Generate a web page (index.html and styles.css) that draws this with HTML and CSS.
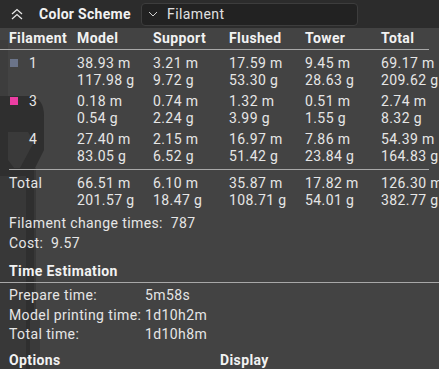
FILE: index.html
```html
<!DOCTYPE html>
<html>
<head>
<meta charset="utf-8">
<link rel="stylesheet" href="styles.css">
</head>
<body>
<div class="scene">
  <svg class="backdrop" width="80" height="369" viewBox="0 0 80 369">
    <path d="M0 168 L36 168 L36 369 L0 369 Z" fill="#383838"/>
    <path d="M0 96 L30 96 Q44 98 44 116 L44 150 L34 170 L34 369 L26 369 L26 176 L0 176 Z" fill="#2f2f2f"/>
    <path d="M8 132 L28 132 L34 142 L20 168 L14 168 L8 160 Z" fill="#3a3a3a"/>
    <path d="M0 40 L0 96 L8 96 L8 40 Z" fill="#3d3d3d"/>
    <path d="M30 320 L40 320 L40 369 L30 369 Z" fill="#3a3a3a"/>
  </svg>
  <div class="panel">
    <div class="topbar">
      <svg class="collapse" width="14" height="12" viewBox="0 0 14 12">
        <path d="M2 6 L7 1.5 L12 6 M2 11 L7 6.5 L12 11" fill="none" stroke="#e8e8e8" stroke-width="1.3"/>
      </svg>
      <span class="title">Color Scheme</span>
      <div class="select">
        <svg width="10" height="6" viewBox="0 0 10 6"><path d="M1 1 L5 5 L9 1" fill="none" stroke="#d0d0d0" stroke-width="1"/></svg>
        <span>Filament</span>
      </div>
    </div>
    <div class="table">
      <div class="row head">
        <div>Filament</div><div>Model</div><div>Support</div><div>Flushed</div><div>Tower</div><div>Total</div>
      </div>
      <div class="rule"></div>
      <div class="row data">
        <div class="fil"><span class="sw sw1"></span>1</div>
        <div>38.93 m<br>117.98 g</div><div>3.21 m<br>9.72 g</div><div>17.59 m<br>53.30 g</div><div>9.45 m<br>28.63 g</div><div>69.17 m<br>209.62 g</div>
      </div>
      <div class="row data">
        <div class="fil"><span class="sw sw3"></span>3</div>
        <div>0.18 m<br>0.54 g</div><div>0.74 m<br>2.24 g</div><div>1.32 m<br>3.99 g</div><div>0.51 m<br>1.55 g</div><div>2.74 m<br>8.32 g</div>
      </div>
      <div class="row data last">
        <div class="fil"><span class="sw sw4"></span>4</div>
        <div>27.40 m<br>83.05 g</div><div>2.15 m<br>6.52 g</div><div>16.97 m<br>51.42 g</div><div>7.86 m<br>23.84 g</div><div>54.39 m<br>164.83 g</div>
      </div>
      <div class="rule short"></div>
      <div class="row data total">
        <div>Total</div>
        <div>66.51 m<br>201.57 g</div><div>6.10 m<br>18.47 g</div><div>35.87 m<br>108.71 g</div><div>17.82 m<br>54.01 g</div><div>126.30 m<br>382.77 g</div>
      </div>
    </div>
    <div class="stats">
      <div>Filament change times:&nbsp;&nbsp;787</div>
      <div>Cost:&nbsp;&nbsp;9.57</div>
    </div>
    <div class="section te">Time Estimation</div>
    <div class="rule full"></div>
    <div class="times">
      <div>Prepare time:</div><div>5m58s</div>
      <div>Model printing time:</div><div>1d10h2m</div>
      <div>Total time:</div><div>1d10h8m</div>
    </div>
    <div class="bottom">
      <div class="section">Options</div>
      <div class="section">Display</div>
    </div>
  </div>
</div>
</body>
</html>
```

FILE: styles.css
```css
* { box-sizing: border-box; }
html, body { margin: 0; padding: 0; }
body {
  width: 439px;
  height: 369px;
  overflow: hidden;
  background: #434343;
  font-family: Roboto, "Noto Sans", sans-serif;
  font-size: 14px;
  letter-spacing: 0.4px;
  color: #e6e6e6;
}
.scene { position: relative; width: 439px; height: 369px; }
.backdrop { position: absolute; left: 0; top: 0; }
.panel { position: relative; }
.topbar {
  height: 28px;
  background: #2c2c2c;
  display: flex;
  align-items: center;
  padding-left: 10px;
}
.collapse { margin-right: 15px; }
.title { font-weight: bold; color: #f2f2f2; width: 102px; letter-spacing: 0.3px; }
.select {
  width: 217px;
  height: 23px;
  background: #222;
  border: 1px solid #3d3d3d;
  border-radius: 4px;
  display: flex;
  align-items: center;
  padding-left: 6px;
  gap: 9px;
  color: #e0e0e0;
}
.table { padding-left: 9px; }
.row { display: grid; grid-template-columns: 68px 76px 76px 76px 76px 76px; white-space: nowrap; }
.head { font-weight: bold; color: #f2f2f2; height: 21px; line-height: 17px; padding-top: 2px; }
.rule { height: 1px; background: #a8a8a8; margin-left: -9px; margin-right: 10px; }
.rule.short { margin-left: 0; margin-right: 10px; }
.rule.full { margin: 0; }
.data { line-height: 17px; padding: 5px 0 0; }
.data + .data { padding-top: 4px; }
.data.last { padding-bottom: 4px; }
.fil { display: flex; align-items: flex-start; }
.sw { width: 8px; height: 8px; margin: 4px 11px 0 1px; }
.sw1 { background: #6b7489; }
.sw3 { background: #ec3ea2; }
.sw4 { background: #3a3a3a; }
.data.total { padding-top: 5px; }
.stats { padding: 4px 9px 0; line-height: 20px; }
.section { font-weight: bold; color: #f2f2f2; padding: 8px 9px 3px; }
.section.te { padding-top: 10px; }
.times {
  display: grid;
  grid-template-columns: 136px auto;
  padding: 3px 9px 0;
  line-height: 19.5px;
}
.bottom { display: grid; grid-template-columns: 211px auto; }
.bottom .section { padding-top: 7px; }
```
